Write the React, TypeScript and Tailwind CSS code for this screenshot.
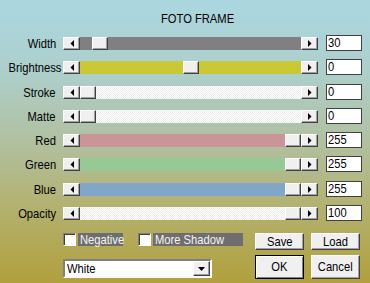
const font = { fontFamily: '"Liberation Sans", Arial, sans-serif' }

const rows = [
  { label: 'Width', value: '30', track: 'bg-[#808080]', thumb: 12 },
  { label: 'Brightness', value: '0', track: 'bg-[#c9c934]', thumb: 103 },
  { label: 'Stroke', value: '0', track: 'dither', thumb: 0 },
  { label: 'Matte', value: '0', track: 'dither', thumb: 0 },
  { label: 'Red', value: '255', track: 'bg-[#c99597]', thumb: 205 },
  { label: 'Green', value: '255', track: 'bg-[#96c995]', thumb: 205 },
  { label: 'Blue', value: '255', track: 'bg-[#80a7c9]', thumb: 205 },
  { label: 'Opacity', value: '100', track: 'dither', thumb: 205 },
]

const raised =
  'bg-[#f0f0f0] border border-t-white border-l-white border-r-[#404040] border-b-[#404040] shadow-[inset_-1px_-1px_0_#a0a0a0]'

// the dialog uses a narrow face; squeeze Liberation Sans to match
function Narrow({ children, from = 'origin-left' }: { children: React.ReactNode; from?: string }) {
  return <span className={`inline-block scale-x-[0.86] ${from}`}>{children}</span>
}

function ArrowLeft() {
  return (
    <svg width="4" height="7" viewBox="0 0 4 7">
      <polygon points="4,0 4,7 0.5,3.5" fill="#000" />
    </svg>
  )
}

function ArrowRight() {
  return (
    <svg width="4" height="7" viewBox="0 0 4 7">
      <polygon points="0,0 0,7 3.5,3.5" fill="#000" />
    </svg>
  )
}

function Slider({ track, thumb }: { track: string; thumb: number }) {
  const trackCls =
    track === 'dither'
      ? 'bg-[repeating-conic-gradient(#ffffff_0_25%,#ececec_0_50%)] bg-[length:2px_2px]'
      : track
  return (
    <div className="mt-[2px] ml-[7px] flex h-[13px] w-[255px]">
      <div className={`${raised} flex w-[17px] items-center justify-center`}>
        <ArrowLeft />
      </div>
      <div className={`relative flex-1 ${trackCls}`}>
        {/* thumb sits over the track */}
        <div className={`${raised} absolute top-0 h-[13px] w-[16px]`} style={{ left: thumb }} />
      </div>
      <div className={`${raised} flex w-[17px] items-center justify-center`}>
        <ArrowRight />
      </div>
    </div>
  )
}

function Check({ label, width }: { label: string; width: string }) {
  return (
    <div className="flex items-center">
      <div className="h-[13px] w-[13px] border border-t-[#808080] border-l-[#808080] border-r-white border-b-white bg-white shadow-[inset_1px_1px_0_#404040]" />
      <div className={`ml-[2px] h-[13px] ${width} bg-[#6e6e6e] pl-[2px] text-[13px] leading-[13px] text-[#f4f4f4]`}>
        <Narrow>{label}</Narrow>
      </div>
    </div>
  )
}

export default function App() {
  return (
    <div
      className="h-[283px] w-[370px] overflow-hidden bg-[linear-gradient(180deg,#abd7e1_0%,#adcfcc_25%,#b1c0a0_50%,#b3b272_72%,#b1a03c_100%)] text-black"
      style={font}
    >
      <div className="pt-[11px] pl-[161px] text-[13px] leading-[15px]">
        <Narrow>FOTO FRAME</Narrow>
      </div>

      <div className="mt-[9px] flex flex-col">
        {rows.map((r) => (
          <div key={r.label} className="flex h-[24.3px] items-start">
            <div className="mt-[1px] w-[56px] text-right text-[13px] leading-[15px]">
              <Narrow from="origin-right">{r.label}</Narrow>
            </div>
            <Slider track={r.track} thumb={r.thumb} />
            <div className="ml-[8px] h-[16px] w-[36px] border border-[#404040] bg-white pl-[1px] text-[13px] leading-[14px]">
              <Narrow>{r.value}</Narrow>
            </div>
          </div>
        ))}
      </div>

      <div className="mt-[4px] flex">
        <div className="ml-[63px] flex w-[192px] flex-col">
          <div className="flex">
            <Check label="Negative" width="w-[45px]" />
            <div className="ml-[15px]">
              <Check label="More Shadow" width="w-[90px]" />
            </div>
          </div>
          <div className="mt-[13px] flex h-[19px] w-[149px] items-center border-2 border-t-[#808080] border-l-[#808080] border-r-white border-b-white bg-white">
            <div className="flex-1 pl-[2px] text-[13px] leading-[15px]">
              <Narrow>White</Narrow>
            </div>
            <div className={`${raised} flex h-[15px] w-[17px] items-center justify-center`}>
              <svg width="7" height="4" viewBox="0 0 7 4">
                <polygon points="0,0 7,0 3.5,4" fill="#000" />
              </svg>
            </div>
          </div>
        </div>

        <div className="grid grid-cols-[49px_49px] gap-x-[7px] gap-y-[5px] text-[13px]">
          <button className={`${raised} h-[17px] leading-[14px]`}>
            <Narrow from="origin-center">Save</Narrow>
          </button>
          <button className={`${raised} h-[17px] leading-[14px]`}>
            <Narrow from="origin-center">Load</Narrow>
          </button>
          <button className="h-[24px] border border-black bg-[#f0f0f0] leading-[20px] shadow-[inset_1px_1px_0_#fff,inset_-1px_-1px_0_#808080]">
            <Narrow from="origin-center">OK</Narrow>
          </button>
          <button className={`${raised} h-[24px] leading-[20px]`}>
            <Narrow from="origin-center">Cancel</Narrow>
          </button>
        </div>
      </div>
    </div>
  )
}
